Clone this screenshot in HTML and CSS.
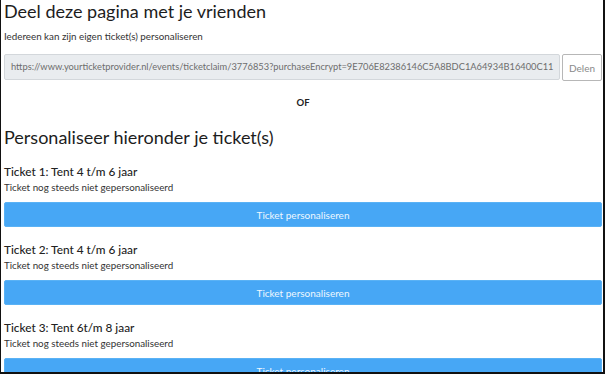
FILE: index.html
```html
<!DOCTYPE html>
<html>
<head>
<meta charset="utf-8">
<link rel="stylesheet" href="styles.css">
</head>
<body>
<div class="frame">
  <div class="content">
    <h1 class="title">Deel deze pagina met je vrienden</h1>
    <p class="intro">Iedereen kan zijn eigen ticket(s) personaliseren</p>
    <div class="share">
      <div class="url">https://www.yourticketprovider.nl/events/ticketclaim/3776853?purchaseEncrypt=9E706E82386146C5A8BDC1A64934B16400C11</div>
      <button class="share-btn">Delen</button>
    </div>
    <div class="or">OF</div>
    <h2 class="title title2">Personaliseer hieronder je ticket(s)</h2>
    <div class="ticket">
      <h3 class="ticket-name">Ticket 1: Tent 4 t/m 6 jaar</h3>
      <p class="ticket-status">Ticket nog steeds niet gepersonaliseerd</p>
      <button class="btn">Ticket personaliseren</button>
    </div>
    <div class="ticket">
      <h3 class="ticket-name">Ticket 2: Tent 4 t/m 6 jaar</h3>
      <p class="ticket-status">Ticket nog steeds niet gepersonaliseerd</p>
      <button class="btn">Ticket personaliseren</button>
    </div>
    <div class="ticket">
      <h3 class="ticket-name">Ticket 3: Tent 6t/m 8 jaar</h3>
      <p class="ticket-status">Ticket nog steeds niet gepersonaliseerd</p>
      <button class="btn">Ticket personaliseren</button>
    </div>
  </div>
</div>
</body>
</html>
```

FILE: styles.css
```css
html, body {
  margin: 0;
  padding: 0;
  background: #fff;
}
body {
  width: 607px;
  height: 375px;
  overflow: hidden;
  font-family: "Lato", "Open Sans", sans-serif;
  color: #212529;
}
.frame {
  box-sizing: border-box;
  width: 605px;
  height: 374px;
  border-left: 1px solid #111;
  border-right: 2px solid #111;
  border-bottom: 2px solid #111;
  overflow: hidden;
}
.content {
  padding: 0 1px 0 3px;
}
.title {
  margin: 1px 0 0 0;
  font-size: 18px;
  font-weight: 400;
  line-height: 20px;
  color: #1d1d1d;
}
.intro {
  margin: 9px 0 0 0;
  font-size: 9.8px;
  line-height: 12px;
  color: #333;
}
.share {
  display: flex;
  margin-top: 12px;
  height: 27px;
  align-items: flex-start;
  gap: 2px;
}
.url {
  flex: 1;
  min-width: 0;
  box-sizing: border-box;
  height: 26px;
  background: #e9ecef;
  border: 1px solid #d3d7db;
  border-radius: 2px;
  font-size: 9.3px;
  color: #6d6d6d;
  line-height: 24px;
  padding: 0 6px;
  white-space: nowrap;
  overflow: hidden;
}
.share-btn {
  box-sizing: border-box;
  width: 40px;
  height: 27px;
  background: #fff;
  border: 1px solid #b7b7b7;
  border-radius: 2px;
  font-family: inherit;
  font-size: 10px;
  color: #8a8a8a;
  padding: 0;
}
.or {
  text-align: center;
  font-weight: 700;
  font-size: 9.5px;
  line-height: 12px;
  margin-top: 16px;
  color: #222;
}
.title2 {
  margin-top: 18px;
}
.ticket {
  margin-top: 18px;
}
.ticket + .ticket {
  margin-top: 16px;
}
.ticket-name {
  margin: 0;
  font-size: 11.8px;
  font-weight: 500;
  line-height: 14px;
  color: #222;
}
.ticket-status {
  margin: 2px 0 0 0;
  font-size: 9.8px;
  line-height: 12px;
  color: #333;
}
.btn {
  display: block;
  box-sizing: border-box;
  width: 100%;
  height: 25px;
  margin-top: 9px;
  background: #47a7f5;
  border: 1px solid #5ab2f5;
  border-radius: 2px;
  color: #eef7ff;
  font-family: inherit;
  font-size: 10px;
  padding: 0;
}
```
